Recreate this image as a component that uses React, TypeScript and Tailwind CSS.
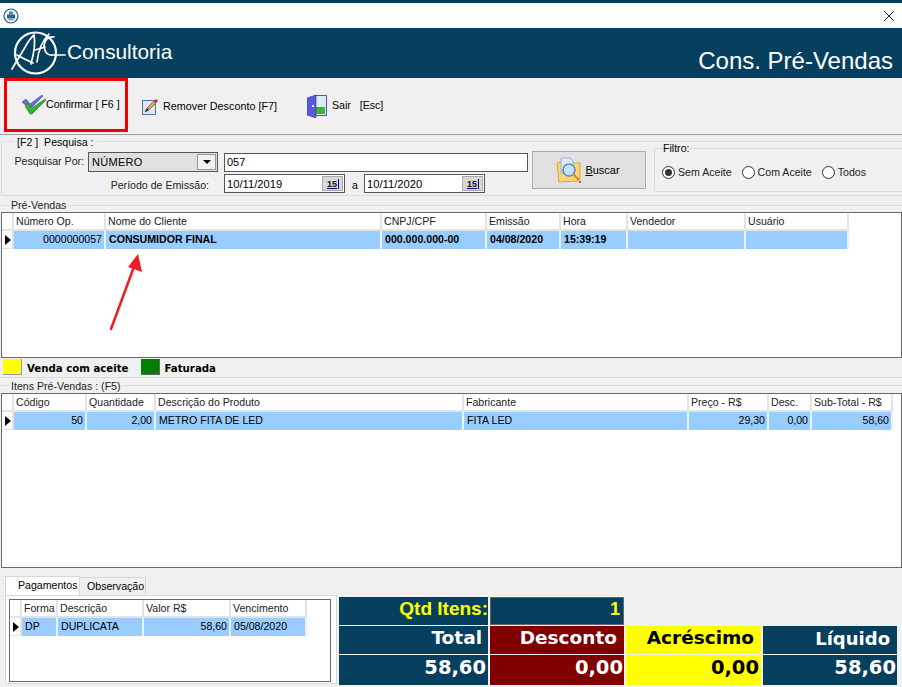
const NAVY = "bg-[#07405f]";

type Col = { title: string; w: number; value?: string; right?: boolean; bold?: boolean };

const pedidoCols: Col[] = [
  { title: "Número Op.", w: 92, value: "0000000057", right: true },
  { title: "Nome do Cliente", w: 276, value: "CONSUMIDOR FINAL", bold: true },
  { title: "CNPJ/CPF", w: 105, value: "000.000.000-00", bold: true },
  { title: "Emissão", w: 74, value: "04/08/2020", bold: true },
  { title: "Hora", w: 67, value: "15:39:19", bold: true },
  { title: "Vendedor", w: 118, value: "" },
  { title: "Usuário", w: 103, value: "" },
];

const itemCols: Col[] = [
  { title: "Código", w: 73, value: "50", right: true },
  { title: "Quantidade", w: 69, value: "2,00", right: true },
  { title: "Descrição do Produto", w: 308, value: "METRO FITA DE LED" },
  { title: "Fabricante", w: 225, value: "FITA LED" },
  { title: "Preço - R$", w: 80, value: "29,30", right: true },
  { title: "Desc.", w: 43, value: "0,00", right: true },
  { title: "Sub-Total - R$", w: 81, value: "58,60", right: true },
];

const pagCols: Col[] = [
  { title: "Forma", w: 36, value: "DP" },
  { title: "Descrição", w: 86, value: "DUPLICATA" },
  { title: "Valor R$", w: 87, value: "58,60", right: true },
  { title: "Vencimento", w: 76, value: "05/08/2020" },
];

function DataGrid({ cols, className }: { cols: Col[]; className: string }) {
  return (
    <div className={`border border-[#696969] bg-white overflow-hidden ${className}`}>
      <div className="flex h-[18px]">
        <div className="w-[12px] shrink-0 border-r-2 border-b-2 border-[#e3e3e3]" />
        {cols.map((c) => (
          <div
            key={c.title}
            style={{ width: c.w }}
            className="shrink-0 border-r-2 border-b-2 border-[#e3e3e3] pl-[2px] leading-[17px] text-[#222] whitespace-nowrap overflow-hidden"
          >
            {c.title}
          </div>
        ))}
      </div>
      <div className="flex h-[18px]">
        <div className="w-[12px] shrink-0 border-r-2 border-b border-[#e3e3e3] flex items-center pl-[3px]">
          <div className="w-0 h-0 border-y-[5px] border-y-transparent border-l-[6px] border-l-black" />
        </div>
        {cols.map((c) => (
          <div
            key={c.title}
            style={{ width: c.w }}
            className={`shrink-0 bg-[#99ccff] border-r-2 border-[#e8f2fb] pl-[3px] pr-[2px] leading-[17px] text-black whitespace-nowrap overflow-hidden ${c.right ? "text-right" : ""} ${c.bold ? "font-bold" : ""}`}
          >
            {c.value}
          </div>
        ))}
      </div>
    </div>
  );
}

function Logo() {
  return (
    <svg width="57" height="50" viewBox="0 0 57 50" className="shrink-0">
      <circle cx="25.5" cy="25" r="20.5" fill="none" stroke="#fff" strokeWidth="2.2" />
      <g fill="none" stroke="#fff" strokeWidth="1.7" strokeLinecap="round">
        <path d="M2 41 L14 21 Q20 10 24 7 Q26 18 21 36" />
        <path d="M7 27 Q14 31 23 35" />
        <path d="M27 34 Q29 16 39 6" />
        <path d="M25 22 L35 19" />
        <path d="M44 9 Q35 8 34 18 Q35 28 43 27 L55 27" />
      </g>
    </svg>
  );
}

function CheckIcon() {
  return (
    <svg width="24" height="20" viewBox="0 0 24 20" className="shrink-0">
      <path d="M0 7 L4 4 L8 9 L20 0 L21 1 L8 14 Z" fill="#6a6ad8" stroke="#4848a8" strokeWidth="0.6" />
      <path d="M3 11 L6 8 L10 13 L23 4 L24 5 L10 19 L8 19 Z" fill="#35b035" stroke="#137d13" strokeWidth="0.6" />
    </svg>
  );
}

function PencilIcon() {
  return (
    <svg width="17" height="17" viewBox="0 0 17 17" className="shrink-0">
      <rect x="0.5" y="2.5" width="13" height="14" fill="#dce8f6" stroke="#5272ac" />
      <path d="M3 14 L5 10 L12 3 L14 5 L7 12 Z" fill="#e0b050" stroke="#555" strokeWidth="0.7" />
      <path d="M12 3 L14 1 L16 3 L14 5 Z" fill="#d02020" />
      <path d="M3 14 L5 10 L7 12 Z" fill="#333" />
    </svg>
  );
}

function DoorIcon() {
  return (
    <svg width="20" height="24" viewBox="0 0 20 24" className="shrink-0">
      <rect x="7.5" y="1.5" width="12" height="20" fill="#d8f0f4" stroke="#5555aa" />
      <rect x="9" y="13" width="9" height="7" fill="#44b030" />
      <path d="M0 4 L9 1 L9 24 L0 21 Z" fill="#5a5ad8" stroke="#34348c" strokeWidth="0.6" />
      <rect x="5" y="11" width="2" height="2" fill="#e8e8ff" />
    </svg>
  );
}

function SearchFolderIcon() {
  return (
    <svg width="26" height="26" viewBox="0 0 26 26" className="shrink-0">
      <path d="M1 6 L8 4 L10 6 L24 6 L24 24 L3 25 Z" fill="#f7d774" stroke="#d8a840" />
      <path d="M5 1 L14 1 L17 4 L17 16 L5 16 Z" fill="#dfe8f8" stroke="#9cb0d8" />
      <circle cx="13" cy="13" r="6" fill="#c4e4f6" stroke="#5b8fc0" strokeWidth="1.6" />
      <path d="M17 17 L23 23" stroke="#d88a30" strokeWidth="2.4" />
      <rect x="23" y="24" width="2" height="2" fill="#e040a0" />
    </svg>
  );
}

function AppIcon() {
  return (
    <svg width="16" height="16" viewBox="0 0 16 16">
      <circle cx="8" cy="8" r="7" fill="#f4f8fc" stroke="#1f5a8c" strokeWidth="1.2" />
      <rect x="6" y="3.5" width="4" height="3" fill="#4a82b4" />
      <rect x="4" y="6.5" width="8" height="4" fill="#2c6496" />
      <rect x="5.5" y="10.5" width="5" height="2" fill="#7aa6cc" />
    </svg>
  );
}

function Radio({ label, checked }: { label: string; checked?: boolean }) {
  return (
    <div className="flex items-center gap-[3px]">
      <div className="w-[13px] h-[13px] rounded-full border border-[#333] bg-white flex items-center justify-center">
        {checked && <div className="w-[7px] h-[7px] rounded-full bg-[#333]" />}
      </div>
      <span className="text-[#222]">{label}</span>
    </div>
  );
}

function DateField({ value }: { value: string }) {
  return (
    <div className="w-[121px] h-[19px] border border-[#555] bg-white flex items-center justify-between pl-[2px] pr-[1px] text-[11.2px]">
      <span>{value}</span>
      <div className="w-[21px] h-[15px] bg-[#d8d8d8] border border-[#aaa] flex items-center justify-center">
        <span className="text-[9px] leading-[10px] font-bold text-[#111] underline decoration-[#00008b] border-r border-[#00008b] px-[1px]">15</span>
      </div>
    </div>
  );
}

function Total({ children, className }: { children: string; className: string }) {
  return (
    <div className={`flex items-center justify-end pb-[4px] font-['DejaVu_Sans'] font-bold ${className}`}>
      {children}
    </div>
  );
}

export default function App() {
  return (
    <div className="relative w-[902px] h-[687px] overflow-hidden bg-[#f0f0f0] text-[10.6px] text-black font-['Liberation_Sans',sans-serif]">
      <div className={`h-[3px] ${NAVY}`} />
      <div className="h-[25px] bg-white flex items-center justify-between pl-[3px] pr-[7px]">
        <AppIcon />
        <svg width="12" height="12" viewBox="0 0 12 12">
          <path d="M1 1 L11 11 M11 1 L1 11" stroke="#222" strokeWidth="1" />
        </svg>
      </div>

      <header className={`h-[50px] ${NAVY} flex items-start justify-between text-white`}>
        <div className="flex items-center pl-[10px]">
          <Logo />
          <span className="text-[20.8px] leading-[50px] -mt-[2px]">Consultoria</span>
        </div>
        <span className="text-[24px] leading-[26px] mt-[20px] mr-[9px]">Cons. Pré-Vendas</span>
      </header>

      <nav className="h-[57px] border-b border-[#a0a0a0] flex items-center">
        <div className="w-[124px] h-[54px] ml-[4px] self-start border-[3px] border-[#f00000] flex items-center pl-[15px] shrink-0">
          <CheckIcon />
          <span className="whitespace-pre">Confirmar [ F6 ]</span>
        </div>
        <div className="flex items-center ml-[14px] gap-[4px]">
          <PencilIcon />
          <span className="text-[10.8px] whitespace-pre">Remover Desconto [F7]</span>
        </div>
        <div className="flex items-center ml-[30px] gap-[5px]">
          <DoorIcon />
          <span className="whitespace-pre">Sair   [Esc]</span>
        </div>
      </nav>

      <section className="relative h-[63px] flex">
        <div className="absolute left-[1px] right-0 top-[6px] bottom-[2px] border-y border-l border-[#dcdcdc]" />
        <span className="absolute left-[14px] top-0 px-[3px] bg-[#f0f0f0] leading-[14px] whitespace-pre">[F2 ]  Pesquisa :</span>
        <div className="relative w-[528px] pt-[17px] flex flex-col gap-[2px] shrink-0">
          <div className="flex items-center">
            <span className="w-[84px] text-right text-[#222]">Pesquisar Por:</span>
            <div className="ml-[4px] w-[130px] h-[20px] border border-[#555] bg-[#e0e0e0] flex items-center justify-between pl-[3px] pr-[1px]">
              <span className="text-[11px] tracking-[0.3px]">NÚMERO</span>
              <div className="w-[19px] h-[16px] bg-[#f2f2f2] border border-[#999] flex items-center justify-center">
                <div className="w-0 h-0 border-x-[4px] border-x-transparent border-t-[4px] border-t-black" />
              </div>
            </div>
            <div className="ml-[6px] w-[304px] h-[19px] border border-[#555] bg-white pl-[2px] leading-[16px] text-[11px]">057</div>
          </div>
          <div className="flex items-center">
            <span className="w-[209px] text-right text-[#222] mt-[4px]">Período de Emissão:</span>
            <div className="ml-[15px]"><DateField value="10/11/2019" /></div>
            <span className="ml-[7px] w-[12px] mt-[4px]">a</span>
            <DateField value="10/11/2020" />
          </div>
        </div>
        <div className="relative ml-[4px] mt-[16px] w-[114px] h-[38px] bg-[#e1e1e1] border border-[#adadad] flex items-center justify-center gap-[3px] pr-[2px]">
          <SearchFolderIcon />
          <span className="text-[11px]"><span className="underline">B</span>uscar</span>
        </div>
        <fieldset className="relative ml-[8px] mt-[7px] w-[248px] h-[50px] border border-[#dcdcdc] border-r-0 px-[7px]">
          <legend className="ml-[1px] leading-[12px]">Filtro:</legend>
          <div className="flex items-center gap-[10px] mt-[11px]">
            <Radio label="Sem Aceite" checked />
            <Radio label="Com Aceite" />
            <Radio label="Todos" />
          </div>
        </fieldset>
      </section>

      <section className="relative pt-[14px]">
        <div className="absolute left-[1px] right-0 top-[7px] border-t border-[#dcdcdc]" />
        <span className="absolute left-[9px] top-0 px-[2px] bg-[#f0f0f0] leading-[14px] text-[#222]">Pré-Vendas</span>
        <DataGrid cols={pedidoCols} className="relative ml-[1px] h-[146px]" />
      </section>

      <div className="flex items-start h-[19px] pl-[3px] pt-[1px] font-['DejaVu_Sans'] font-bold text-[10.2px]">
        <div className="w-[19px] h-[16px] bg-[#ffff00] border-b border-r border-[#999]" />
        <span className="ml-[5px] mt-[3px] leading-[13px]">Venda com aceite</span>
        <div className="ml-[12px] w-[19px] h-[16px] bg-[#008000] border-b border-r border-[#666]" />
        <span className="ml-[5px] mt-[3px] leading-[13px]">Faturada</span>
      </div>

      <section className="relative pt-[16px]">
        <div className="absolute left-0 right-0 top-0 border-t border-[#dcdcdc]" />
        <div className="absolute left-[1px] right-0 top-[8px] border-t border-[#dcdcdc]" />
        <span className="absolute left-[9px] top-[2px] px-[2px] bg-[#f0f0f0] leading-[14px] text-[#222] whitespace-pre">Itens Pré-Vendas : (F5)</span>
        <DataGrid cols={itemCols} className="relative ml-[1px] h-[175px]" />
      </section>

      <section className="flex mt-[8px] h-[111px] pl-[5px] items-start">
        <div className="w-[332px] shrink-0">
          <div className="flex items-end h-[19px]">
            <div className="h-[19px] w-[75px] bg-white border-t border-x border-[#d8d8d8] pl-[12px] leading-[16px]">Pagamentos</div>
            <div className="h-[18px] w-[66px] bg-[#f0f0f0] border-t border-r border-[#d8d8d8] pl-[7px] leading-[17px] whitespace-nowrap">Observação</div>
          </div>
          <div className="h-[89px] bg-white border border-[#d8d8d8] pl-[3px] pt-[3px]">
            <DataGrid cols={pagCols} className="w-[322px] h-[83px]" />
          </div>
        </div>
        <div className="ml-[2px] mt-[21px] w-[558px] grid grid-cols-[149px_134px_135px_134px] grid-rows-[28px_28px_30px] gap-x-[2px] gap-y-[1px] text-white text-[18.5px]">
          <div className={`${NAVY} flex items-center justify-end pb-[3px] font-bold text-[19px] text-[#ffff00]`}>Qtd Itens:</div>
          <div className={`${NAVY} border border-[#666] flex items-center justify-end pr-[3px] pb-[3px] font-bold text-[18px] text-[#ffff00]`}>1</div>
          <div />
          <div />
          <Total className={`${NAVY} pr-[6px]`}>Total</Total>
          <Total className="bg-[#800000] pr-[7px]">Desconto</Total>
          <Total className="bg-[#ffff00] text-black pr-[7px]">Acréscimo</Total>
          <Total className={`${NAVY} pr-[7px] text-[18px]`}>Líquido</Total>
          <Total className={`${NAVY} pr-[2px] text-[19.5px]`}>58,60</Total>
          <Total className="bg-[#800000] pr-[1px] text-[19.5px]">0,00</Total>
          <Total className="bg-[#ffff00] text-black pr-[2px] text-[19.5px]">0,00</Total>
          <Total className={`${NAVY} pr-[1px] text-[19.5px]`}>58,60</Total>
        </div>
      </section>

      <svg className="absolute left-[106px] top-[250px]" width="40" height="84" viewBox="0 0 40 84">
        <path d="M5 79 L29 14" stroke="#ee1c25" strokeWidth="2.5" strokeLinecap="round" />
        <path d="M32 4 L36 22 L22 17 Z" fill="#ee1c25" />
      </svg>
    </div>
  );
}
